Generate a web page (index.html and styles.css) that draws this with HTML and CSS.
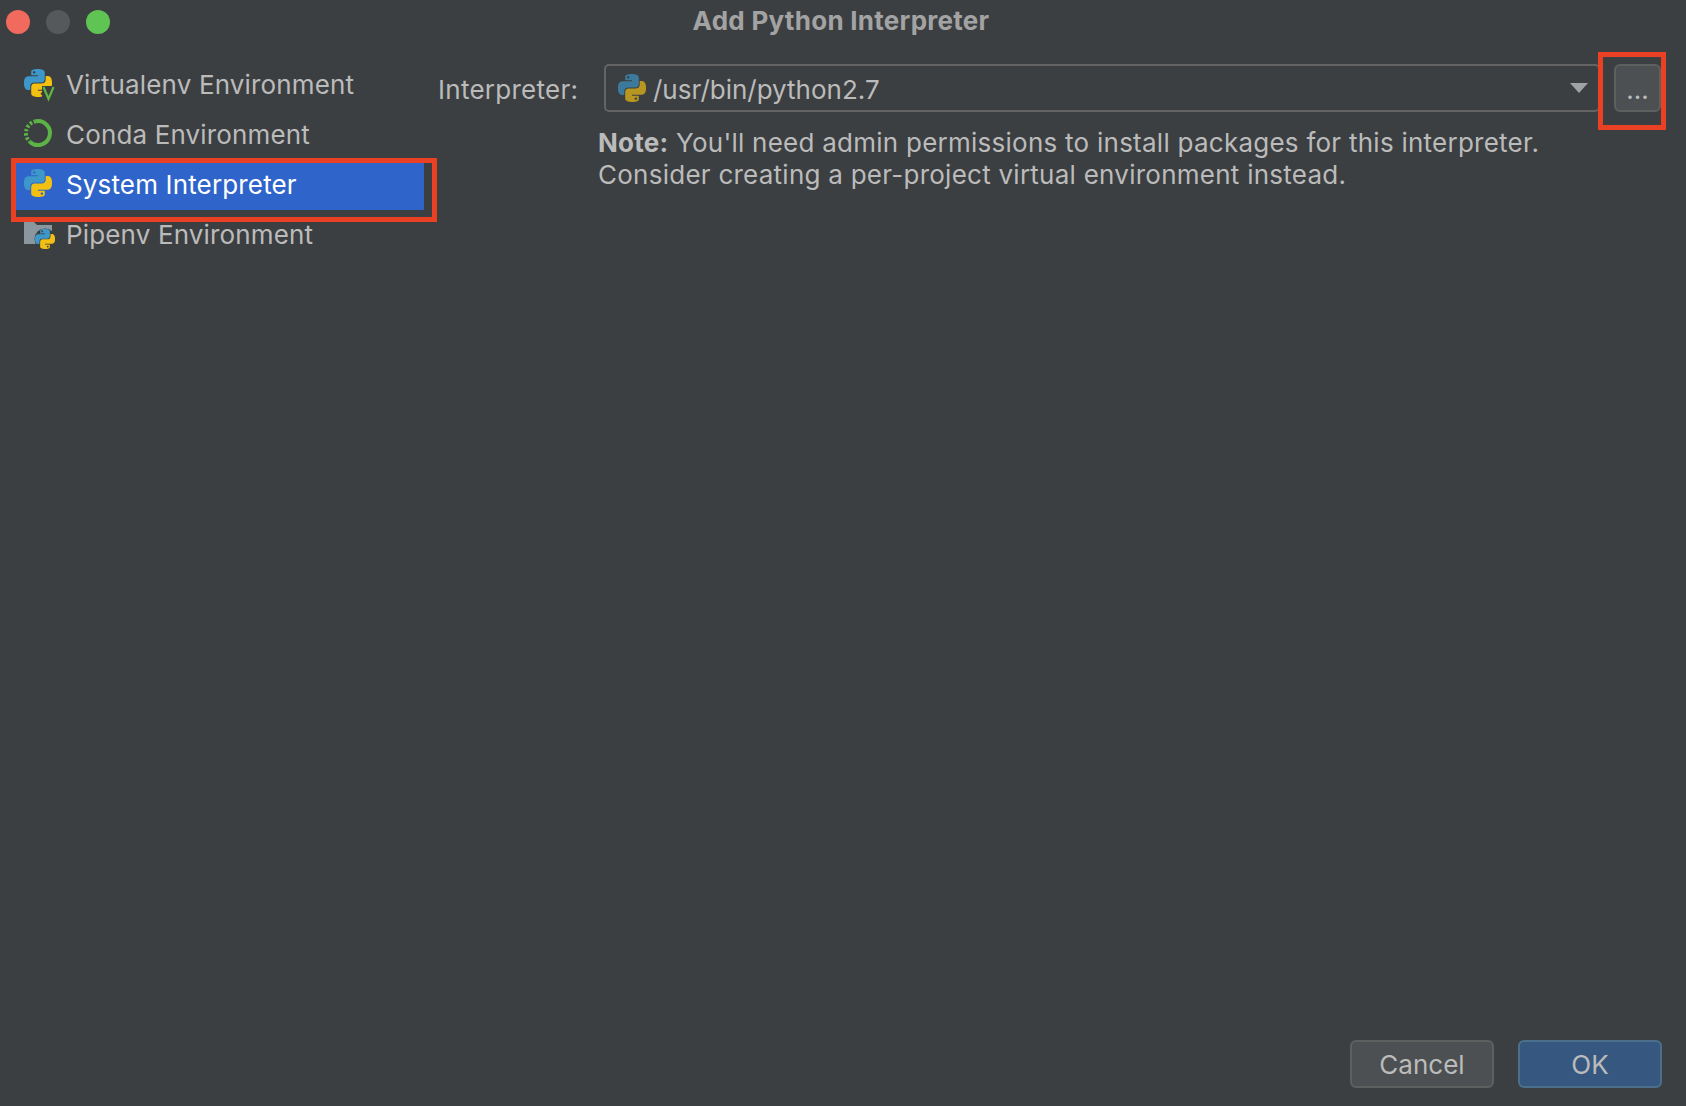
FILE: index.html
```html
<!DOCTYPE html>
<html lang="en">
<head>
    <meta charset="UTF-8">
    <meta name="viewport" content="width=device-width, initial-scale=1.0">
    <title>Add Python Interpreter</title>
    <link rel="stylesheet" href="styles.css">
</head>
<body>
    <svg class="defs" width="0" height="0">
        <symbol id="py" viewBox="0 0 24 24">
            <path class="py-blue" d="M14.25.18l.9.2.73.26.59.3.45.32.34.34.25.34.16.33.1.3.04.26.02.2-.01.13V8.5l-.05.63-.13.55-.21.46-.26.38-.3.31-.33.25-.35.19-.35.14-.33.1-.3.07-.26.04-.21.02H8.77l-.69.05-.59.14-.5.22-.41.27-.33.32-.27.35-.2.36-.15.37-.1.35-.07.32-.04.27-.02.21v3.06H3.17l-.21-.03-.28-.07-.32-.12-.35-.18-.36-.26-.36-.36-.35-.46-.32-.59-.28-.73-.21-.88-.14-1.05-.05-1.23.06-1.22.16-1.04.24-.87.32-.71.36-.57.4-.44.42-.33.42-.24.4-.16.36-.1.32-.05.24-.01h.16l.06.01h8.16v-.83H6.18l-.01-2.75-.02-.37.05-.34.11-.31.17-.28.25-.26.31-.23.38-.2.44-.18.51-.15.58-.12.64-.1.71-.06.77-.04.84-.02 1.27.05zm-6.3 1.98l-.23.33-.08.41.08.41.23.34.33.22.41.09.41-.09.33-.22.23-.34.08-.41-.08-.41-.23-.33-.33-.22-.41-.09-.41.09z"/>
            <path class="py-yellow" d="M21.04 6.11l.28.06.32.12.35.18.36.27.36.35.35.47.32.59.28.73.21.88.14 1.04.05 1.23-.06 1.23-.16 1.04-.24.86-.32.71-.36.57-.4.45-.42.33-.42.24-.4.16-.36.09-.32.05-.24.02-.16-.01h-8.22v.82h5.84l.01 2.76.02.36-.05.34-.11.31-.17.29-.25.25-.31.24-.38.2-.44.17-.51.15-.58.13-.64.09-.71.07-.77.04-.84.01-1.27-.04-1.07-.14-.9-.2-.73-.25-.59-.3-.45-.33-.34-.34-.25-.34-.16-.33-.1-.3-.04-.25-.02-.2.01-.13v-5.34l.05-.64.13-.54.21-.46.26-.38.3-.32.33-.24.35-.2.35-.14.33-.1.3-.06.26-.04.21-.02.13-.01h5.84l.69-.05.59-.14.5-.21.41-.28.33-.32.27-.35.2-.36.15-.36.1-.35.07-.32.04-.28.02-.21V6.07h2.09l.14.01zm-6.47 14.25l-.23.33-.08.41.08.41.23.33.33.23.41.08.41-.08.33-.23.23-.33.08-.41-.08-.41-.23-.33-.33-.23-.41-.08-.41.08z"/>
        </symbol>
    </svg>

    <div id="hop-thoai">
        <div class="title-bar">
            <div class="lights">
                <span class="light light-red"></span>
                <span class="light light-gray"></span>
                <span class="light light-green"></span>
            </div>
            <div class="title">Add Python Interpreter</div>
        </div>

        <div class="content">
            <ul class="env-list">
                <li class="env-item">
                    <svg class="env-icon" viewBox="0 0 30 30">
                        <use href="#py" x="0" y="0" width="28" height="28"/>
                        <rect class="v-notch" x="18" y="17" width="13" height="14"/>
                        <path class="v-mark" d="M19.5 18l5 12 5-12"/>
                    </svg>
                    <span>Virtualenv Environment</span>
                </li>
                <li class="env-item">
                    <svg class="env-icon" viewBox="0 0 30 30">
                        <path class="conda-ring" d="M12 2.2A12 12 0 1 1 6 23"/>
                        <path class="conda-dots" d="M12 2.2A12 12 0 0 0 6 23"/>
                    </svg>
                    <span>Conda Environment</span>
                </li>
                <li class="env-item selected">
                    <svg class="env-icon" viewBox="0 0 30 30">
                        <use href="#py" x="0" y="0" width="28" height="28"/>
                    </svg>
                    <span>System Interpreter</span>
                </li>
                <li class="env-item">
                    <svg class="env-icon" viewBox="0 0 30 30">
                        <path class="folder" d="M0 2h9l4 4h15v19H0z"/>
                        <circle class="folder-hole" cx="21" cy="20" r="10.5"/>
                        <use href="#py" x="11" y="10" width="20" height="20"/>
                    </svg>
                    <span>Pipenv Environment</span>
                </li>
            </ul>

            <div class="form">
                <div class="form-row">
                    <label class="form-label">Interpreter:</label>
                    <div class="combo">
                        <svg class="combo-icon" width="28" height="28"><use href="#py" width="28" height="28"/></svg>
                        <span class="combo-text">/usr/bin/python2.7</span>
                        <span class="combo-arrow"></span>
                    </div>
                    <button class="btn btn-more">...</button>
                </div>
                <p class="note">
                    <b>Note:</b> You'll need admin permissions to install packages for this interpreter.<br>
                    Consider creating a per-project virtual environment instead.
                </p>
            </div>
        </div>

        <div class="footer">
            <button class="btn btn-footer">Cancel</button>
            <button class="btn btn-footer btn-ok">OK</button>
        </div>

        <div class="mark mark-row"></div>
        <div class="mark mark-more"></div>
    </div>
</body>
</html>
```

FILE: styles.css
```css
*{
    box-sizing: border-box;
    padding: 0;
    margin: 0;
}

body{
    background-color: #3c3f41;
    font-family: Inter, "Noto Sans", sans-serif;
    font-size: 26px;
    color: #bbbbbb;
    overflow: hidden;
}

.defs{
    position: absolute;
}

#hop-thoai{
    position: relative;
    width: 1686px;
    height: 1106px;
    display: flex;
    flex-direction: column;
}

.py-blue{
    fill: #3d97c9;
}
.py-yellow{
    fill: #f1c012;
}

/* title bar */
.title-bar{
    position: relative;
    height: 44px;
    padding-right: 4px;
    padding-bottom: 4px;
    display: flex;
    align-items: center;
    justify-content: center;
}
.lights{
    position: absolute;
    left: 6px;
    top: 10px;
    display: flex;
    gap: 16px;
}
.light{
    width: 24px;
    height: 24px;
    border-radius: 50%;
}
.light-red{
    background-color: #f16a5e;
}
.light-gray{
    background-color: #56595b;
}
.light-green{
    background-color: #5fc454;
}
.title{
    font-size: 26px;
    font-weight: 700;
    letter-spacing: 0.27px;
    color: #a3a3a3;
}

/* left list + right form */
.content{
    flex: 1;
    display: flex;
}

.env-list{
    list-style: none;
    width: 408px;
    margin-left: 16px;
    padding-top: 19px;
    display: flex;
    flex-direction: column;
    gap: 3px;
}
.env-item{
    height: 47px;
    padding-left: 8px;
    padding-bottom: 5px;
    display: flex;
    align-items: center;
    gap: 12px;
    letter-spacing: 0.15px;
}
.env-item.selected{
    background-color: #2f65ca;
    color: #ffffff;
}
.env-icon{
    width: 30px;
    height: 30px;
    flex: none;
    overflow: visible;
}
.v-notch{
    fill: #3c3f41;
}
.v-mark{
    fill: none;
    stroke: #62b543;
    stroke-width: 2.2;
}
.conda-ring{
    fill: none;
    stroke: #5cb346;
    stroke-width: 4;
}
.conda-dots{
    fill: none;
    stroke: #5cb346;
    stroke-width: 4;
    stroke-dasharray: 2.4 1.8;
}
.folder{
    fill: #8a979f;
}
.folder-hole{
    fill: #3c3f41;
}

.form{
    flex: 1;
    padding-left: 14px;
    padding-right: 25px;
    padding-top: 20px;
}
.form-row{
    display: flex;
    align-items: center;
}
.form-label{
    width: 166px;
    letter-spacing: 0.27px;
    padding-top: 2px;
}
.combo{
    flex: 1;
    height: 48px;
    margin-right: 14px;
    border: 2px solid #646464;
    border-radius: 5px;
    padding-left: 12px;
    padding-right: 10px;
    display: flex;
    align-items: center;
    gap: 7px;
}
.combo-icon{
    flex: none;
    opacity: 0.68;
}
.combo-text{
    flex: 1;
    padding-top: 2px;
}
.combo-arrow{
    width: 0;
    height: 0;
    border-left: 9px solid transparent;
    border-right: 9px solid transparent;
    border-top: 10px solid #a0a2a4;
}
.btn{
    font-family: inherit;
    font-size: 26px;
    color: #bbbbbb;
    background-color: #4c5052;
    border: 2px solid #5e6060;
    border-radius: 6px;
    height: 48px;
}
.btn-more{
    width: 47px;
    flex: none;
    padding-top: 2px;
}
.note{
    margin-left: 160px;
    margin-top: 15px;
    line-height: 32px;
    letter-spacing: 0.25px;
}
.note b{
    font-weight: 700;
}

.footer{
    display: flex;
    justify-content: flex-end;
    gap: 24px;
    padding-right: 24px;
    padding-bottom: 18px;
}
.btn-footer{
    width: 144px;
}
.btn-ok{
    background-color: #365880;
    border-color: #4c708c;
}

/* red annotation boxes */
.mark{
    position: absolute;
    border: 5px solid #ea4023;
}
.mark-row{
    left: 11px;
    top: 158px;
    width: 426px;
    height: 64px;
}
.mark-more{
    left: 1598px;
    top: 52px;
    width: 68px;
    height: 78px;
}
```
